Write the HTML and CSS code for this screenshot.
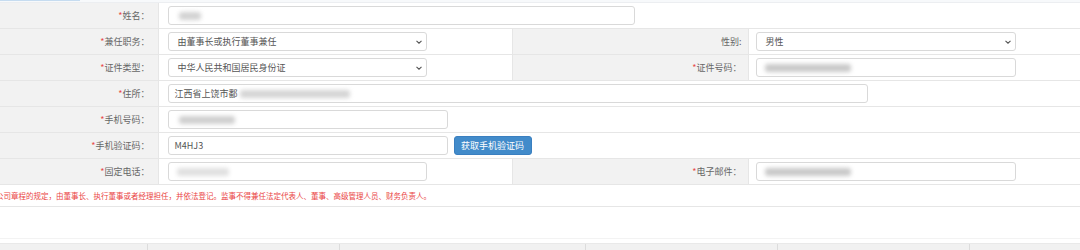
FILE: index.html
```html
<!DOCTYPE html>
<html lang="zh-CN">
<head>
<meta charset="utf-8">
<title>表单</title>
<link rel="stylesheet" href="styles.css">
</head>
<body>
<div class="topbar"><span class="tab"></span></div>
<table class="form">
  <colgroup>
    <col class="c1"><col class="c2"><col class="c3"><col class="c4">
  </colgroup>
  <tr>
    <td class="lbl"><span class="req">*</span>姓名<span class="colon">：</span></td>
    <td class="val" colspan="3"><div class="field w-name"><span class="blur b-name"></span></div></td>
  </tr>
  <tr>
    <td class="lbl"><span class="req">*</span>兼任职务<span class="colon">：</span></td>
    <td class="val"><div class="field select w-sel">由董事长或执行董事兼任<svg class="chev" viewBox="0 0 6 4"><path d="M0.5 0.8 L3 3.2 L5.5 0.8" /></svg></div></td>
    <td class="lbl lbl2">性别:</td>
    <td class="val val2"><div class="field select w-sel2">男性<svg class="chev" viewBox="0 0 6 4"><path d="M0.5 0.8 L3 3.2 L5.5 0.8" /></svg></div></td>
  </tr>
  <tr>
    <td class="lbl"><span class="req">*</span>证件类型<span class="colon">：</span></td>
    <td class="val"><div class="field select w-sel">中华人民共和国居民身份证<svg class="chev" viewBox="0 0 6 4"><path d="M0.5 0.8 L3 3.2 L5.5 0.8" /></svg></div></td>
    <td class="lbl lbl2"><span class="req">*</span>证件号码<span class="colon">：</span></td>
    <td class="val val2"><div class="field w-sel2"><span class="blur b-id"></span></div></td>
  </tr>
  <tr>
    <td class="lbl"><span class="req">*</span>住所<span class="colon">：</span></td>
    <td class="val" colspan="3"><div class="field w-addr">江西省上饶市鄱<span class="blur b-addr"></span></div></td>
  </tr>
  <tr>
    <td class="lbl"><span class="req">*</span>手机号码<span class="colon">：</span></td>
    <td class="val" colspan="3"><div class="field w-phone"><span class="blur b-phone"></span></div></td>
  </tr>
  <tr>
    <td class="lbl"><span class="req">*</span>手机验证码<span class="colon">：</span></td>
    <td class="val" colspan="3"><div class="inline"><div class="field w-phone">M4HJ3</div><button class="btn">获取手机验证码</button></div></td>
  </tr>
  <tr>
    <td class="lbl"><span class="req">*</span>固定电话<span class="colon">：</span></td>
    <td class="val"><div class="field w-sel"><span class="blur b-tel"></span></div></td>
    <td class="lbl lbl2"><span class="req">*</span>电子邮件<span class="colon">：</span></td>
    <td class="val val2"><div class="field w-sel2"><span class="blur b-id"></span></div></td>
  </tr>
  <tr class="note-row">
    <td class="note" colspan="4"><span class="note-text">公司章程的规定，由董事长、执行董事或者经理担任，并依法登记。监事不得兼任法定代表人、董事、高级管理人员、财务负责人。</span></td>
  </tr>
</table>
<div class="blank"></div>
<div class="footer">
  <div class="fc f1"></div>
  <div class="fc f2"></div>
  <div class="fc f3"></div>
  <div class="fc f4"></div>
  <div class="fc f5"></div>
  <div class="fc f6"></div>
</div>
</body>
</html>
```
FILE: styles.css
```css
html, body {
  margin: 0;
  padding: 0;
  background: #fff;
  font-family: "Noto Sans CJK SC", "Microsoft YaHei", sans-serif;
  width: 1080px;
  height: 250px;
  overflow: hidden;
}

.topbar {
  height: 2px;
  border-bottom: 1px solid #eceef1;
  background: #f7f9fb;
}
.tab {
  display: block;
  width: 80px;
  height: 1px;
  background: #c6dcf0;
}

.form {
  width: 1080px;
  border-collapse: collapse;
  table-layout: fixed;
}
.c1 { width: 158px; }
.c2 { width: 354px; }
.c3 { width: 236px; }
.c4 { width: 332px; }

.form td {
  height: 25px;
  padding: 0;
  border-bottom: 1px solid #e6e6e6;
  font-size: 9px;
  line-height: 12px;
  vertical-align: middle;
}

.lbl {
  background: #f2f2f2;
  color: #666;
  text-align: right;
  padding-right: 8px !important;
  border-right: 1px solid #e6e6e6;
}
.lbl2 {
  padding-right: 6px !important;
  border-left: 1px solid #e6e6e6;
}
.req { color: #e84b4b; }
.colon {
  font-family: "Noto Sans CJK TC", "Noto Sans CJK SC", sans-serif;
}

.val { padding-left: 9px !important; }
.val2 { padding-left: 7px !important; }

.field {
  box-sizing: border-box;
  height: 19px;
  border: 1px solid #d9d9d9;
  border-radius: 3px;
  background: #fff;
  color: #555;
  font-size: 9px;
  line-height: 17px;
  padding-left: 6px;
  display: flex;
  align-items: center;
  white-space: nowrap;
  overflow: hidden;
}
.select {
  padding-left: 9px;
  justify-content: space-between;
  padding-right: 4px;
}
.chev {
  width: 6px;
  height: 4px;
  fill: none;
  stroke: #555;
  stroke-width: 1.1;
}

.w-name { width: 467px; }
.w-sel { width: 259px; }
.w-sel2 { width: 260px; }
.w-addr { width: 700px; }
.w-phone { width: 280px; }

.inline {
  display: flex;
  align-items: center;
  gap: 6px;
}

.btn {
  height: 19px;
  width: 78px;
  padding: 0;
  border: 1px solid #3a7fc0;
  border-radius: 3px;
  background: #428bca;
  color: #fff;
  font-family: inherit;
  font-size: 9px;
  line-height: 17px;
}

.blur {
  display: inline-block;
  height: 8px;
  background: #c9c9c9;
  filter: blur(2px);
  border-radius: 3px;
}
.b-name { width: 22px; margin-left: 4px; background: #d2d2d2; }
.b-id { width: 86px; margin-left: 2px; }
.b-addr { width: 110px; margin-left: 2px; background: #d5d5d5; }
.b-phone { width: 56px; margin-left: 4px; background: #cfcfcf; }
.b-tel { width: 52px; margin-left: 2px; background: #e0e0e0; }

.note-row td {
  height: 21px;
  border-bottom: 1px solid #e6e6e6;
  background: #fff;
  overflow: hidden;
  white-space: nowrap;
}
.note-text {
  display: inline-block;
  margin-left: -4px;
  color: #ea4545;
  font-size: 7.5px;
  letter-spacing: 0;
}

.blank {
  height: 31px;
  border-bottom: 1px solid #f3f3f3;
}

.footer {
  margin-top: 4px;
  height: 8px;
  border-top: 1px solid #e9e9e9;
  background: #f1f1f1;
  display: flex;
}
.fc {
  border-right: 1px solid #dcdcdc;
}
.f1 { width: 147px; }
.f2 { width: 191px; }
.f3 { width: 245px; }
.f4 { width: 191px; }
.f5 { width: 191px; }
.f6 { flex: 1; border-right: none; }
```
